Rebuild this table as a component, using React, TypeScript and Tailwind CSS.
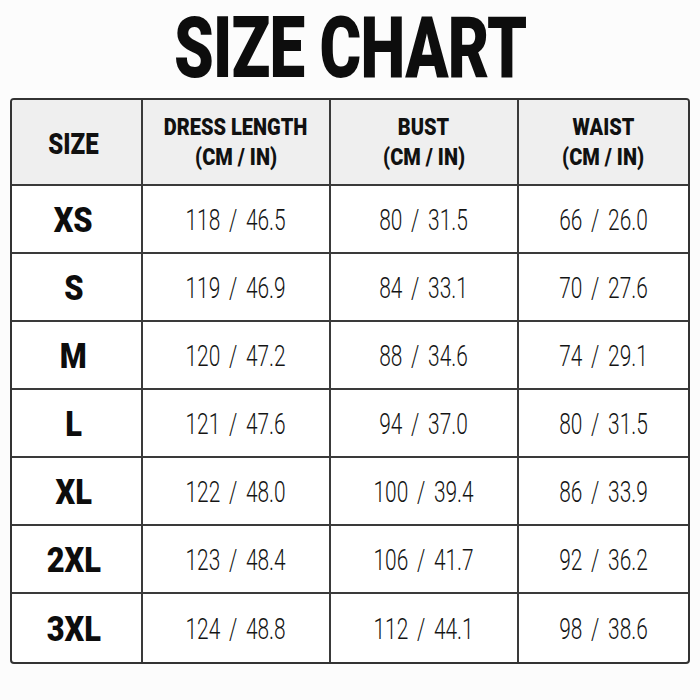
import React from "react";

const rows = [
  ["XS", "118 / 46.5", "80 / 31.5", "66 / 26.0"],
  ["S", "119 / 46.9", "84 / 33.1", "70 / 27.6"],
  ["M", "120 / 47.2", "88 / 34.6", "74 / 29.1"],
  ["L", "121 / 47.6", "94 / 37.0", "80 / 31.5"],
  ["XL", "122 / 48.0", "100 / 39.4", "86 / 33.9"],
  ["2XL", "123 / 48.4", "106 / 41.7", "92 / 36.2"],
  ["3XL", "124 / 48.8", "112 / 44.1", "98 / 38.6"],
];

const font = { fontFamily: "Roboto, 'Liberation Sans', sans-serif" };

function Head({ top, bottom }: { top: string; bottom: string }) {
  return (
    <div className="flex flex-col items-center justify-center border-l-2 border-[#3a3a3a] pt-[2px]">
      <span className="inline-block scale-x-[0.87] text-[23px] font-black leading-[30px] text-[#111] whitespace-nowrap">
        {top}
      </span>
      <span className="inline-block scale-x-[0.87] text-[23px] font-black leading-[30px] text-[#111] whitespace-nowrap">
        {bottom}
      </span>
    </div>
  );
}

export default function App() {
  return (
    <div
      className="w-[700px] h-[700px] bg-[#fcfcfc] flex flex-col items-center"
      style={font}
    >
      <div className="h-[98px] w-full flex items-center justify-center pb-[2px]">
        <span className="inline-block scale-x-[0.74] text-[86px] font-black leading-[1.1] tracking-[-1px] text-[#0d0d0d] whitespace-nowrap">
          SIZE CHART
        </span>
      </div>
      <div className="w-[680px] border-2 border-[#333] rounded-[4px] overflow-hidden bg-white">
        <div className="grid grid-cols-[129px_188px_188px_1fr] h-[86px] border-b-2 border-[#3a3a3a] bg-[#efefef]">
          <div className="flex items-center justify-center pt-[4px] pr-[6px]">
            <span className="inline-block scale-x-[0.8] text-[30px] font-black leading-none text-[#111]">
              SIZE
            </span>
          </div>
          <Head top="DRESS LENGTH" bottom="(CM / IN)" />
          <Head top="BUST" bottom="(CM / IN)" />
          <Head top="WAIST" bottom="(CM / IN)" />
        </div>
        {rows.map((r, i) => (
          <div
            key={r[0]}
            className={
              "grid grid-cols-[129px_188px_188px_1fr] h-[68px] " +
              (i < rows.length - 1 ? "border-b-2 border-[#3a3a3a]" : "")
            }
          >
            <div className="flex items-center justify-center pr-[6px] pt-[2px]">
              <span className="inline-block scale-x-[0.88] text-[35px] font-black leading-none text-[#0d0d0d]">
                {r[0]}
              </span>
            </div>
            {r.slice(1).map((v, j) => (
              <div
                key={j}
                className="flex items-center justify-center border-l-2 border-[#3a3a3a] pt-[2px]"
              >
                <span className="inline-block scale-x-[0.72] text-[29px] font-light leading-none [word-spacing:5px] text-[#141414] whitespace-nowrap">
                  {v}
                </span>
              </div>
            ))}
          </div>
        ))}
      </div>
    </div>
  );
}
